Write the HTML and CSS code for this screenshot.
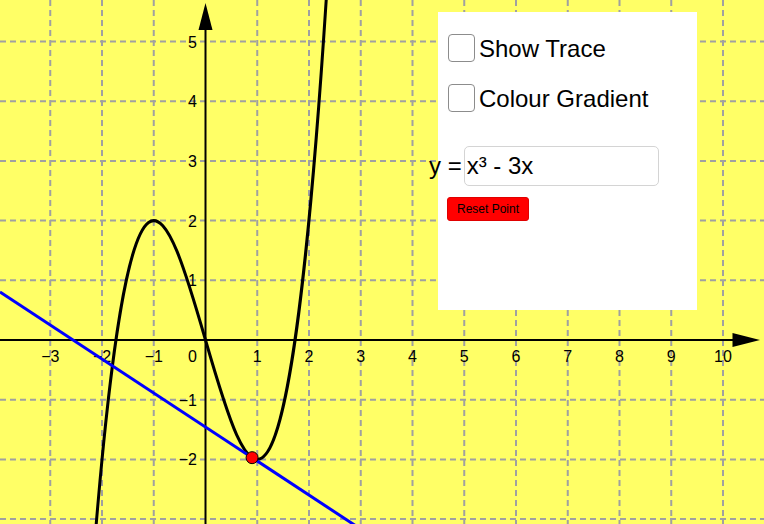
FILE: index.html
```html
<!DOCTYPE html>
<html>
<head>
<meta charset="utf-8">
<link rel="stylesheet" href="styles.css">
</head>
<body>
<div class="stage">
  <svg class="graph" width="764" height="524" viewBox="0 0 764 524" xmlns="http://www.w3.org/2000/svg">
    <rect class="bg" x="0" y="0" width="764" height="524"/>
    <g class="grid">
      <line x1="50.25" y1="0" x2="50.25" y2="524"/>
      <line x1="102" y1="0" x2="102" y2="524"/>
      <line x1="153.75" y1="0" x2="153.75" y2="524"/>
      <line x1="257.25" y1="0" x2="257.25" y2="524"/>
      <line x1="309" y1="0" x2="309" y2="524"/>
      <line x1="360.75" y1="0" x2="360.75" y2="524"/>
      <line x1="412.5" y1="0" x2="412.5" y2="524"/>
      <line x1="464.25" y1="0" x2="464.25" y2="524"/>
      <line x1="516" y1="0" x2="516" y2="524"/>
      <line x1="567.75" y1="0" x2="567.75" y2="524"/>
      <line x1="619.5" y1="0" x2="619.5" y2="524"/>
      <line x1="671.25" y1="0" x2="671.25" y2="524"/>
      <line x1="723" y1="0" x2="723" y2="524"/>
      <line x1="0" y1="41.5" x2="764" y2="41.5"/>
      <line x1="0" y1="101.2" x2="764" y2="101.2"/>
      <line x1="0" y1="160.9" x2="764" y2="160.9"/>
      <line x1="0" y1="220.6" x2="764" y2="220.6"/>
      <line x1="0" y1="280.3" x2="764" y2="280.3"/>
      <line x1="0" y1="399.7" x2="764" y2="399.7"/>
      <line x1="0" y1="459.4" x2="764" y2="459.4"/>
      <line x1="0" y1="519.1" x2="764" y2="519.1"/>
    </g>
    <g class="axes">
      <line x1="0" y1="340" x2="736" y2="340"/>
      <line x1="205.5" y1="524" x2="205.5" y2="26"/>
    </g>
    <polygon class="arrow" points="760,340 732.5,333 732.5,347"/>
    <polygon class="arrow" points="205.5,3 198.5,30 212.5,30"/>
    <g class="labels">
      <text class="xl" x="50.25" y="362">−3</text>
      <text class="xl" x="102" y="362">−2</text>
      <text class="xl" x="153.75" y="362">−1</text>
      <text class="yl" x="197" y="362">0</text>
      <text class="xl" x="257.25" y="362">1</text>
      <text class="xl" x="309" y="362">2</text>
      <text class="xl" x="360.75" y="362">3</text>
      <text class="xl" x="412.5" y="362">4</text>
      <text class="xl" x="464.25" y="362">5</text>
      <text class="xl" x="516" y="362">6</text>
      <text class="xl" x="567.75" y="362">7</text>
      <text class="xl" x="619.5" y="362">8</text>
      <text class="xl" x="671.25" y="362">9</text>
      <text class="xl" x="723" y="362">10</text>
      <text class="yl" x="197" y="47.5">5</text>
      <text class="yl" x="197" y="107.2">4</text>
      <text class="yl" x="197" y="166.9">3</text>
      <text class="yl" x="197" y="226.6">2</text>
      <text class="yl" x="197" y="286.3">1</text>
      <text class="yl" x="197" y="405.7">−1</text>
      <text class="yl" x="197" y="465.4">−2</text>
    </g>
    <path class="curve" d="M91.65 581.67 C171 -472.88 250.35 1251.74 329.7 -55.45"/>
    <line class="tangent" x1="0" y1="291.9" x2="360" y2="528.6"/>
    <circle class="point" cx="252.08" cy="457.67" r="6"/>
  </svg>

  <div class="panel">
    <div class="check-row">
      <span class="box"></span>
      <span class="check-label">Show Trace</span>
    </div>
    <div class="check-row second">
      <span class="box"></span>
      <span class="check-label">Colour Gradient</span>
    </div>
    <div class="input-row">
      <span class="caption">y =</span>
      <div class="input">x³ - 3x</div>
    </div>
    <button class="reset">Reset Point</button>
  </div>
</div>
</body>
</html>
```
FILE: styles.css
```css
html, body {
  margin: 0;
  padding: 0;
  background: #ffff66;
}
.stage {
  position: relative;
  width: 764px;
  height: 524px;
  overflow: hidden;
  font-family: "Liberation Sans", Arial, sans-serif;
}
.graph {
  display: block;
}
.bg {
  fill: #ffff66;
}
.grid line {
  stroke: #a0a0a0;
  stroke-width: 2;
  stroke-dasharray: 6 4;
}
.axes line {
  stroke: #000;
  stroke-width: 2;
}
.arrow {
  fill: #000;
}
.labels text {
  font-family: "Liberation Sans", Arial, sans-serif;
  font-size: 16px;
  fill: #000;
}
.labels .xl {
  text-anchor: middle;
}
.labels .yl {
  text-anchor: end;
}
.curve {
  fill: none;
  stroke: #000;
  stroke-width: 3;
}
.tangent {
  stroke: #0000ff;
  stroke-width: 3;
}
.point {
  fill: #ff0000;
  stroke: #000;
  stroke-width: 1;
}
.panel {
  position: absolute;
  left: 438px;
  top: 12px;
  width: 259px;
  height: 298px;
  background: #fff;
  box-sizing: border-box;
  padding: 22px 10px 0 10px;
  display: flex;
  flex-direction: column;
  align-items: flex-start;
}
.check-row {
  display: flex;
  align-items: center;
  gap: 4px;
  height: 28px;
}
.check-row.second {
  margin-top: 22px;
}
.box {
  width: 27px;
  height: 28px;
  box-sizing: border-box;
  border: 1.5px solid #8c8c8c;
  border-radius: 4px;
  background: #fff;
}
.check-label {
  font-size: 24px;
  line-height: 28px;
  color: #000;
  position: relative;
  top: 1px;
}
.input-row {
  display: flex;
  align-items: center;
  gap: 2px;
  margin-top: 34px;
  margin-left: -19px;
}
.caption {
  font-size: 24px;
  color: #000;
}
.input {
  width: 195px;
  height: 40px;
  box-sizing: border-box;
  border: 1px solid #d4d4d4;
  border-radius: 5px;
  padding-left: 2px;
  font-size: 24px;
  line-height: 38px;
  color: #000;
  background: #fff;
}
.reset {
  margin-top: 11px;
  margin-left: -1px;
  width: 82px;
  height: 24px;
  padding: 0;
  box-sizing: border-box;
  border: 1px solid #e00000;
  border-radius: 3px;
  background: #ff0000;
  color: #000;
  font-family: "Liberation Sans", Arial, sans-serif;
  font-size: 12px;
}
```
